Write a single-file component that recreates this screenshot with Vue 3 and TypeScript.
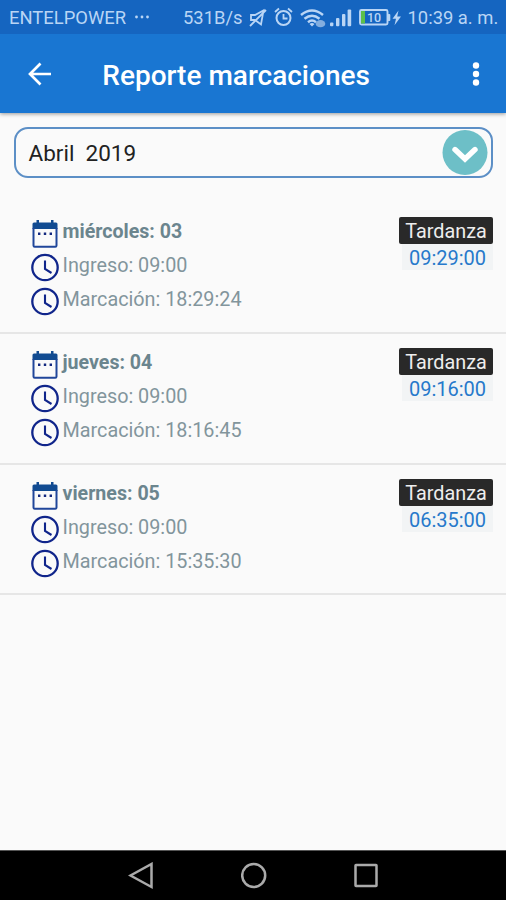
<script setup lang="ts">
interface Marcacion {
  dia: string
  ingreso: string
  marcacion: string
  tardanza: string
}

const periodo = 'Abril  2019'
const marcaciones: Marcacion[] = [
  { dia: 'miércoles: 03', ingreso: '09:00', marcacion: '18:29:24', tardanza: '09:29:00' },
  { dia: 'jueves: 04', ingreso: '09:00', marcacion: '18:16:45', tardanza: '09:16:00' },
  { dia: 'viernes: 05', ingreso: '09:00', marcacion: '15:35:30', tardanza: '06:35:00' },
]
</script>

<template>
  <div class="screen">
    <div class="status">
      <span class="carrier">ENTELPOWER</span>
      <svg class="more" width="16" height="4" viewBox="0 0 16 4">
        <circle cx="2.5" cy="2" r="1.4" /><circle cx="8" cy="2" r="1.4" /><circle cx="13.5" cy="2" r="1.4" />
      </svg>
      <span class="speed">531B/s</span>
      <svg class="status-icons" width="154" height="34" viewBox="248 0 154 34">
        <g fill="none" stroke="#b9d5f5" stroke-width="1.8">
          <path d="M251 15h4l8.500-4.500-2.500 14-6-4.500h-4zM266 10L250 26" />
          <circle cx="283.500" cy="18" r="7" stroke-width="2" />
          <path d="M283.500 14v4.500h4M275 12l4-3.500M292 12l-4-3.500" />
          <path stroke-width="2.500" d="M301 15q11-9 22 0M304.500 18.700q7.500-6 15 0M308 22.200q4-3.300 8 0" />
        </g>
        <g fill="#b9d5f5">
          <path d="M309.500 24q2.500-1.800 5 0l-2.500 2.500z" />
          <ellipse cx="320.500" cy="23.700" rx="4.800" ry="3.600" fill="#83aedf" />
          <rect x="330" y="22.500" width="3.400" height="3.800" rx="1" />
          <rect x="336" y="18" width="3.400" height="8.300" rx="1" />
          <rect x="342" y="14" width="3.400" height="12.300" rx="1" />
          <rect x="347.600" y="9.500" width="3.600" height="16.800" rx="1" />
          <path d="M398.500 10.500l-6 8.200h3.500l-1.500 6.500 6.500-8.700h-3.800z" />
          <rect x="387.500" y="14" width="2.800" height="7" rx="1" />
        </g>
        <rect x="360" y="10" width="27.500" height="14.500" rx="1.500" fill="none" stroke="#b9d5f5" stroke-width="1.900" />
        <rect x="361" y="11" width="4" height="12.500" fill="#5cc04a" />
        <text x="374" y="21.800" text-anchor="middle" class="charge">10</text>
      </svg>
      <span class="time">10:39 a. m.</span>
    </div>

    <header class="appbar">
      <svg class="back" width="24" height="24" viewBox="0 0 24 24">
        <path d="M23 12H2M12.500 1.500L2 12l10.500 10.500" />
      </svg>
      <h1 class="title">Reporte marcaciones</h1>
      <svg class="menu" width="8" height="26" viewBox="0 0 8 26">
        <circle cx="4" cy="4.500" r="3.200" /><circle cx="4" cy="13" r="3.200" /><circle cx="4" cy="21.500" r="3.200" />
      </svg>
    </header>

    <main class="content">
      <div class="select">
        <span class="period">{{ periodo }}</span>
        <svg width="46" height="46" viewBox="0 0 46 46">
          <circle cx="23" cy="22.500" r="22.500" fill="#6dbfc7" />
          <path d="M13 19.500l10 9.500 10-9.500" fill="none" stroke="#fff" stroke-width="5.400" stroke-linecap="round" />
        </svg>
      </div>

      <ul class="list">
        <li v-for="m in marcaciones" :key="m.dia" class="row">
          <div class="info">
            <div class="line">
              <svg width="28" height="30" viewBox="0 0 28 30">
                <path d="M3 3.500h22a1.500 1.500 0 0 1 1.500 1.500v5h-25V5A1.500 1.500 0 0 1 3 3.500zM5.500 1h2.500v4H5.500zM20 1h2.500v4H20z" fill="#114b91" />
                <path d="M2.500 9v17.500a1.200 1.200 0 0 0 1.200 1.200h20.600a1.200 1.200 0 0 0 1.200-1.200V9" fill="none" stroke="#20469a" stroke-width="2" />
                <path d="M7 13.500h2.400v2.400H7zM12.800 13.500h2.400v2.400h-2.400zM18.600 13.500H21v2.400h-2.400z" fill="#13287f" />
              </svg>
              <span class="day">{{ m.dia }}</span>
            </div>
            <div v-for="t in [`Ingreso: ${m.ingreso}`, `Marcación: ${m.marcacion}`]" :key="t" class="line">
              <svg width="28" height="30" viewBox="0 0 28 30">
                <g fill="none" stroke="#10258b">
                  <circle cx="14" cy="14.500" r="12.700" stroke-width="2.300" />
                  <path d="M14 7.500V16l6.500 4" stroke-width="2.100" />
                </g>
              </svg>
              <span class="label">{{ t }}</span>
            </div>
          </div>
          <div class="late">
            <span class="badge">Tardanza</span>
            <span class="amount">{{ m.tardanza }}</span>
          </div>
        </li>
      </ul>
    </main>

    <nav class="navbar">
      <svg width="26" height="28" viewBox="0 0 26 28"><path d="M23.500 2v23L2.500 13.500z" /></svg>
      <svg width="26" height="28" viewBox="0 0 26 28"><circle cx="12.700" cy="13.500" r="11.500" /></svg>
      <svg width="26" height="28" viewBox="0 0 26 28"><rect x="2.500" y="3" width="21" height="21" rx=".5" /></svg>
    </nav>
  </div>
</template>

<style>
body {
  margin: 0;
}
</style>

<style scoped>
.screen {
  display: flex;
  flex-direction: column;
  width: 506px;
  height: 900px;
  overflow: hidden;
  background: #fafafa;
  font-family: Roboto, "Liberation Sans", sans-serif;
}

svg {
  display: block;
  flex: none;
}

.status {
  display: flex;
  align-items: center;
  position: relative;
  z-index: 1;
  height: 34px;
  flex: none;
  box-sizing: border-box;
  padding-left: 9px;
  background: #1565c0;
  color: #b9d5f5;
  font-size: 18.400px;
  line-height: 34px;
  white-space: nowrap;
}

.status span {
  flex: none;
  padding-top: 2px;
}

.carrier {
  width: 125px;
}

.more {
  fill: #b9d5f5;
}

.speed {
  width: 65px;
  margin-left: 33px;
}

.time {
  margin-left: 5.500px;
}

.charge {
  fill: #b9d5f5;
  font-size: 12.500px;
  font-weight: 500;
}

.appbar {
  display: flex;
  align-items: center;
  height: 78.500px;
  flex: none;
  box-sizing: border-box;
  padding: 1px 26px 0 28px;
  background: #1976d2;
  box-shadow: 0 1px 4px rgba(0, 0, 0, 0.4);
}

.back {
  fill: none;
  stroke: #fff;
  stroke-width: 2.700px;
}

.title {
  flex: 1;
  margin: 4px 0 0 50.300px;
  color: #fff;
  font-size: 28px;
  font-weight: 500;
  line-height: 36px;
  white-space: nowrap;
}

.menu {
  fill: #fff;
}

.content {
  flex: 1;
  padding-top: 14.500px;
}

.select {
  display: flex;
  align-items: center;
  justify-content: space-between;
  height: 51px;
  box-sizing: border-box;
  margin: 0 13px 0 14px;
  padding: 0 3px 0 12.500px;
  border: 2px solid #5c8fc6;
  border-radius: 14px;
}

.period {
  color: #222;
  font-size: 22.500px;
  white-space: pre;
}

.list {
  margin: 0;
  padding: 25px 0 0;
  list-style: none;
}

.row {
  display: flex;
  justify-content: space-between;
  height: 130.800px;
  box-sizing: border-box;
  padding: 14px 13px 0 31px;
  border-bottom: 2px solid #e6e6e6;
}

.line {
  display: flex;
  align-items: center;
  gap: 3.500px;
  height: 34px;
  color: #82959c;
  font-size: 19.800px;
  line-height: 28px;
  white-space: nowrap;
}

.line span {
  padding-bottom: 4px;
}

.line .day {
  color: #6b858e;
  font-size: 19.600px;
  font-weight: 700;
}

.late {
  display: flex;
  flex-direction: column;
  align-items: flex-end;
  font-size: 20px;
}

.badge {
  height: 27px;
  width: 94px;
  border-radius: 2px;
  background: #292929;
  color: #eee;
  font-size: 19.800px;
  line-height: 29px;
  text-align: center;
}

.amount {
  height: 26px;
  width: 91px;
  background: #f2f4f5;
  color: #2679cb;
  line-height: 28px;
  text-align: center;
}

.navbar {
  display: flex;
  align-items: center;
  justify-content: center;
  gap: 86.500px;
  height: 50px;
  box-sizing: border-box;
  padding-left: 1px;
  border-top: 1px solid #555;
  background: #000;
  fill: none;
  stroke: #aaa;
  stroke-width: 2.500px;
}
</style>
